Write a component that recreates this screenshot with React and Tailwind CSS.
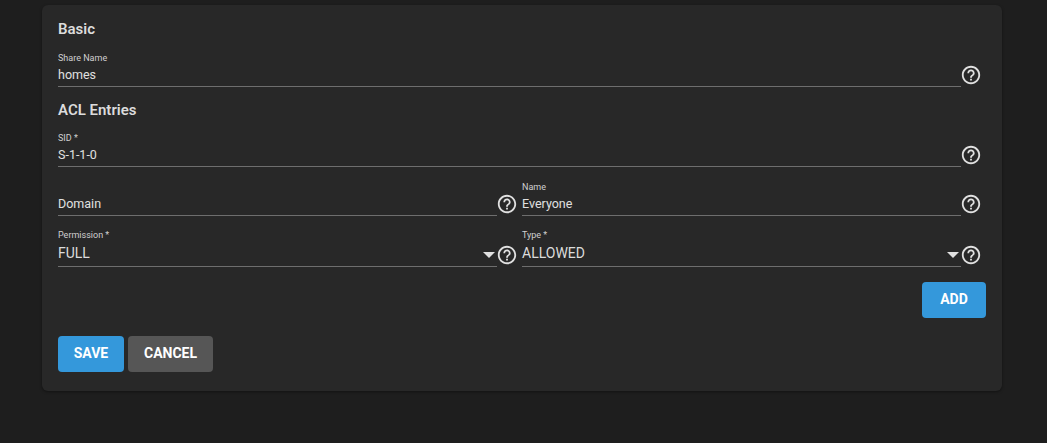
const Help = () => (
  <svg viewBox="0 0 24 24" className="w-[22px] h-[22px] shrink-0 fill-[#e0e0e0]">
    <path d="M11 18h2v-2h-2v2zm1-16C6.48 2 2 6.48 2 12s4.48 10 10 10 10-4.48 10-10S17.52 2 12 2zm0 18c-4.41 0-8-3.59-8-8s3.59-8 8-8 8 3.59 8 8-3.59 8-8 8zm0-14c-2.21 0-4 1.79-4 4h2c0-1.1.9-2 2-2s2 .9 2 2c0 2-3 1.75-3 5h2c0-2.25 3-2.5 3-5 0-2.21-1.79-4-4-4z" />
  </svg>
);

const Field = ({ label, value, select }) => (
  <div className="flex items-end min-w-0">
    <div className="flex-1 min-w-0 h-[40px] border-b border-[#6e6e6e] flex flex-col justify-end relative">
      {label && (
        <div className={(select ? "top-[2px]" : "top-[5px]") + " absolute left-0 text-[9px] leading-[12px] text-[#d0d0d0]"}>{label}</div>
      )}
      {select ? (
        <div className="flex items-center justify-between h-[25px] text-[14px] leading-[25px] text-[#dcdcdc]">
          <span>{value}</span>
          <span className="w-0 h-0 mt-[2px] mr-[2px] border-x-[6px] border-x-transparent border-t-[6px] border-t-[#e0e0e0]" />
        </div>
      ) : (
        <div className="h-[23px] text-[12.5px] leading-[23px] text-[#e0e0e0]">{value}</div>
      )}
    </div>
    <div className="mb-[1px] w-[20px] flex justify-center"><Help /></div>
  </div>
);

const Btn = ({ children, color, w }) => (
  <button className={"h-[36px] pb-[1px] rounded-[4px] text-white font-bold text-[14px] " + color + " " + w}>{children}</button>
);

export default function App() {
  return (
    <div className="min-h-[443px] bg-[#1e1e1e] font-['Roboto',sans-serif] pt-[5px] pb-[52px] pl-[42px] pr-[45px]">
      <div className="h-[386px] rounded-[6px] bg-[#282828] shadow-[0_1px_3px_rgba(0,0,0,0.4)] pl-[16px] pr-[21px] pt-[14px]">
        <h2 className="text-[15px] leading-[20px] font-semibold text-[#dcdcdc]">Basic</h2>
        <div className="mt-[8px]"><Field label="Share Name" value="homes" /></div>
        <h2 className="mt-[13px] text-[15px] leading-[20px] font-semibold text-[#dcdcdc]">ACL Entries</h2>
        <div className="mt-[7px]"><Field label="SID *" value="S-1-1-0" /></div>
        <div className="mt-[9px] grid grid-cols-2 gap-x-[5px]">
          <Field value="Domain" />
          <Field label="Name" value="Everyone" />
        </div>
        <div className="mt-[11px] grid grid-cols-2 gap-x-[5px]">
          <Field label="Permission *" value="FULL" select />
          <Field label="Type *" value="ALLOWED" select />
        </div>
        <div className="mt-[15px] -mr-[5px] flex justify-end">
          <Btn color="bg-[#3498db]" w="w-[64px]">ADD</Btn>
        </div>
        <div className="mt-[18px] flex gap-[4px]">
          <Btn color="bg-[#3498db]" w="w-[66px]">SAVE</Btn>
          <Btn color="bg-[#565656]" w="w-[85px]">CANCEL</Btn>
        </div>
      </div>
    </div>
  );
}
